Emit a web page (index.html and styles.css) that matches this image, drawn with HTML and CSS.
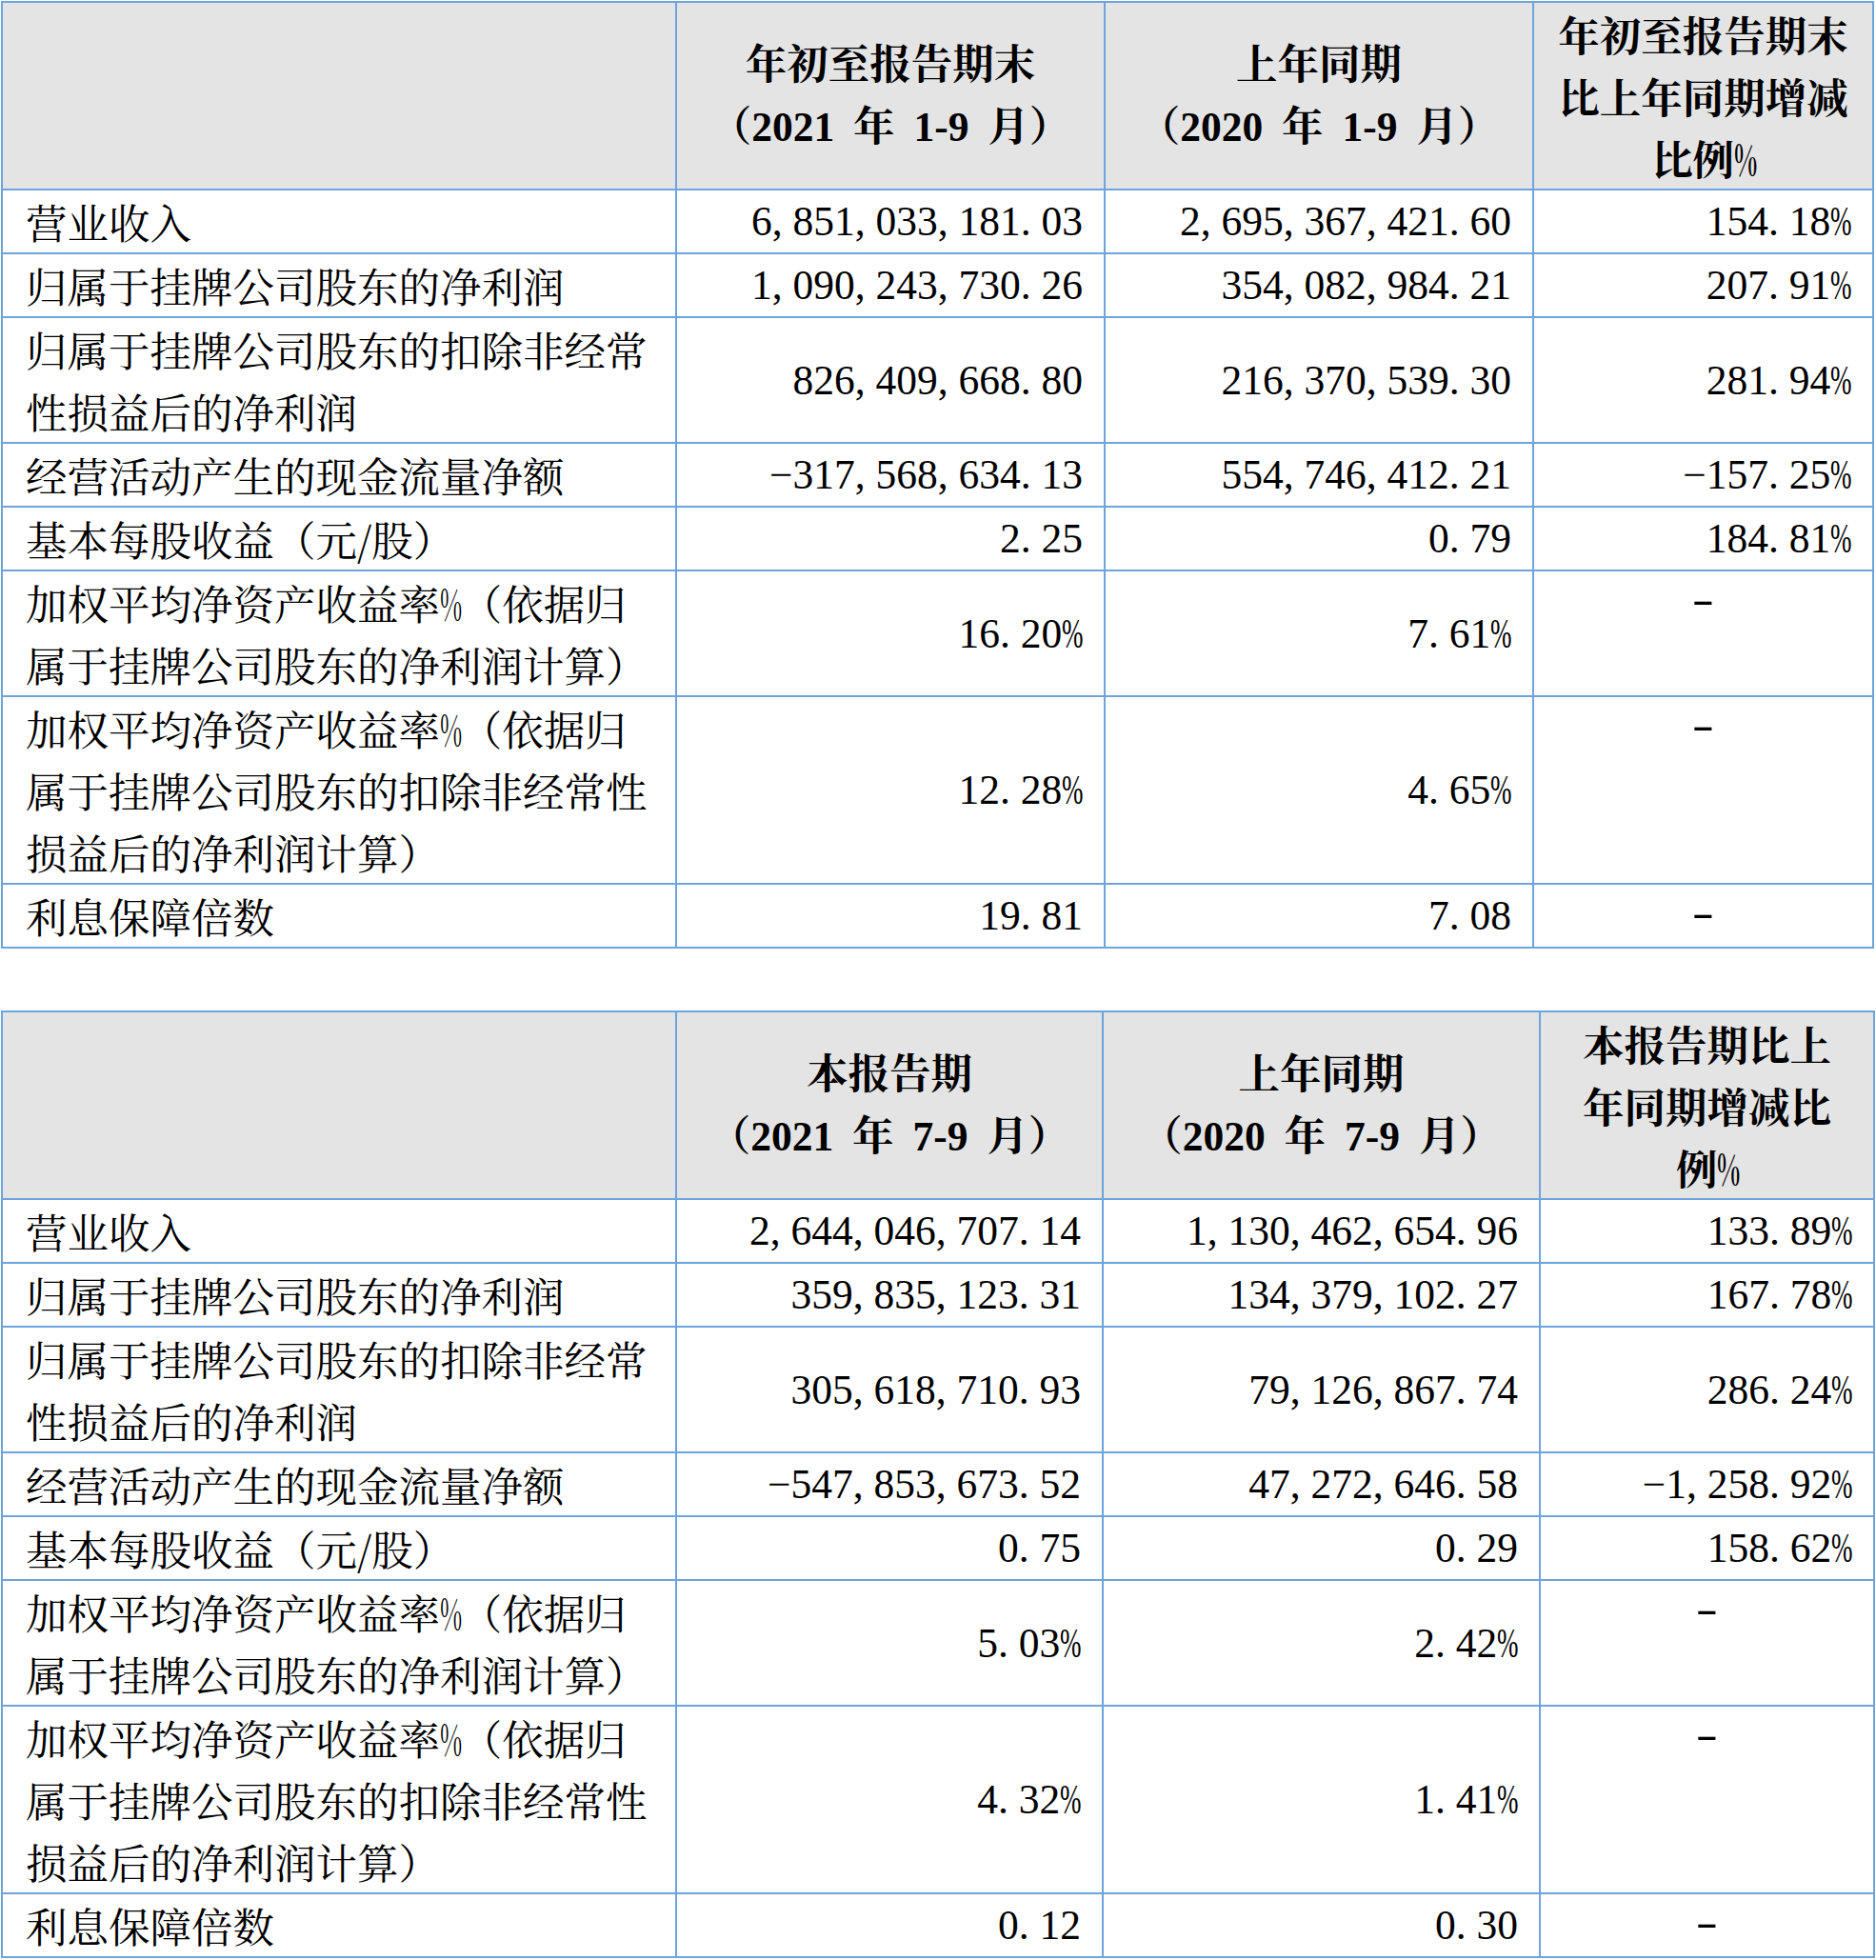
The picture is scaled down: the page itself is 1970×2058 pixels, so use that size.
FILE: index.html
```html
<!DOCTYPE html>
<html lang="zh-CN">
<head>
<meta charset="utf-8">
<title>主要财务数据</title>
<link rel="stylesheet" href="styles.css">
</head>
<body>
<table class="fin t1">
  <colgroup><col class="c1"><col class="c2"><col class="c3"><col class="c4"></colgroup>
  <tbody>
    <tr class="hd">
      <td></td>
      <td class="hmix">年初至报告期末<br>（2021 年 1-9 月）</td>
      <td class="hmix">上年同期<br>（2020 年 1-9 月）</td>
      <td class="hcjk">年初至报告期末<br>比上年同期增减<br>比例<span class="lp">%</span></td>
    </tr>
    <tr>
      <td class="lbl">营业收入</td>
      <td class="num">6<span class="p">,</span>851<span class="p">,</span>033<span class="p">,</span>181<span class="p">.</span>03</td>
      <td class="num">2<span class="p">,</span>695<span class="p">,</span>367<span class="p">,</span>421<span class="p">.</span>60</td>
      <td class="num">154<span class="p">.</span>18<span class="pc">%</span></td>
    </tr>
    <tr>
      <td class="lbl">归属于挂牌公司股东的净利润</td>
      <td class="num">1<span class="p">,</span>090<span class="p">,</span>243<span class="p">,</span>730<span class="p">.</span>26</td>
      <td class="num">354<span class="p">,</span>082<span class="p">,</span>984<span class="p">.</span>21</td>
      <td class="num">207<span class="p">.</span>91<span class="pc">%</span></td>
    </tr>
    <tr>
      <td class="lbl">归属于挂牌公司股东的扣除非经常<br>性损益后的净利润</td>
      <td class="num">826<span class="p">,</span>409<span class="p">,</span>668<span class="p">.</span>80</td>
      <td class="num">216<span class="p">,</span>370<span class="p">,</span>539<span class="p">.</span>30</td>
      <td class="num">281<span class="p">.</span>94<span class="pc">%</span></td>
    </tr>
    <tr>
      <td class="lbl">经营活动产生的现金流量净额</td>
      <td class="num">−317<span class="p">,</span>568<span class="p">,</span>634<span class="p">.</span>13</td>
      <td class="num">554<span class="p">,</span>746<span class="p">,</span>412<span class="p">.</span>21</td>
      <td class="num">−157<span class="p">.</span>25<span class="pc">%</span></td>
    </tr>
    <tr>
      <td class="lbl">基本每股收益（元/股）</td>
      <td class="num">2<span class="p">.</span>25</td>
      <td class="num">0<span class="p">.</span>79</td>
      <td class="num">184<span class="p">.</span>81<span class="pc">%</span></td>
    </tr>
    <tr>
      <td class="lbl">加权平均净资产收益率<span class="lp">%</span>（依据归<br>属于挂牌公司股东的净利润计算）</td>
      <td class="num">16<span class="p">.</span>20<span class="pc">%</span></td>
      <td class="num">7<span class="p">.</span>61<span class="pc">%</span></td>
      <td class="nil"><span class="dash">-</span></td>
    </tr>
    <tr>
      <td class="lbl">加权平均净资产收益率<span class="lp">%</span>（依据归<br>属于挂牌公司股东的扣除非经常性<br>损益后的净利润计算）</td>
      <td class="num">12<span class="p">.</span>28<span class="pc">%</span></td>
      <td class="num">4<span class="p">.</span>65<span class="pc">%</span></td>
      <td class="nil"><span class="dash">-</span></td>
    </tr>
    <tr>
      <td class="lbl">利息保障倍数</td>
      <td class="num">19<span class="p">.</span>81</td>
      <td class="num">7<span class="p">.</span>08</td>
      <td class="nil"><span class="dash">-</span></td>
    </tr>
  </tbody>
</table>

<table class="fin t2">
  <colgroup><col class="d1"><col class="d2"><col class="d3"><col class="d4"></colgroup>
  <tbody>
    <tr class="hd">
      <td></td>
      <td class="hmix">本报告期<br>（2021 年 7-9 月）</td>
      <td class="hmix">上年同期<br>（2020 年 7-9 月）</td>
      <td class="hcjk">本报告期比上<br>年同期增减比<br>例<span class="lp">%</span></td>
    </tr>
    <tr>
      <td class="lbl">营业收入</td>
      <td class="num">2<span class="p">,</span>644<span class="p">,</span>046<span class="p">,</span>707<span class="p">.</span>14</td>
      <td class="num">1<span class="p">,</span>130<span class="p">,</span>462<span class="p">,</span>654<span class="p">.</span>96</td>
      <td class="num">133<span class="p">.</span>89<span class="pc">%</span></td>
    </tr>
    <tr>
      <td class="lbl">归属于挂牌公司股东的净利润</td>
      <td class="num">359<span class="p">,</span>835<span class="p">,</span>123<span class="p">.</span>31</td>
      <td class="num">134<span class="p">,</span>379<span class="p">,</span>102<span class="p">.</span>27</td>
      <td class="num">167<span class="p">.</span>78<span class="pc">%</span></td>
    </tr>
    <tr>
      <td class="lbl">归属于挂牌公司股东的扣除非经常<br>性损益后的净利润</td>
      <td class="num">305<span class="p">,</span>618<span class="p">,</span>710<span class="p">.</span>93</td>
      <td class="num">79<span class="p">,</span>126<span class="p">,</span>867<span class="p">.</span>74</td>
      <td class="num">286<span class="p">.</span>24<span class="pc">%</span></td>
    </tr>
    <tr>
      <td class="lbl">经营活动产生的现金流量净额</td>
      <td class="num">−547<span class="p">,</span>853<span class="p">,</span>673<span class="p">.</span>52</td>
      <td class="num">47<span class="p">,</span>272<span class="p">,</span>646<span class="p">.</span>58</td>
      <td class="num">−1<span class="p">,</span>258<span class="p">.</span>92<span class="pc">%</span></td>
    </tr>
    <tr>
      <td class="lbl">基本每股收益（元/股）</td>
      <td class="num">0<span class="p">.</span>75</td>
      <td class="num">0<span class="p">.</span>29</td>
      <td class="num">158<span class="p">.</span>62<span class="pc">%</span></td>
    </tr>
    <tr>
      <td class="lbl">加权平均净资产收益率<span class="lp">%</span>（依据归<br>属于挂牌公司股东的净利润计算）</td>
      <td class="num">5<span class="p">.</span>03<span class="pc">%</span></td>
      <td class="num">2<span class="p">.</span>42<span class="pc">%</span></td>
      <td class="nil"><span class="dash">-</span></td>
    </tr>
    <tr>
      <td class="lbl">加权平均净资产收益率<span class="lp">%</span>（依据归<br>属于挂牌公司股东的扣除非经常性<br>损益后的净利润计算）</td>
      <td class="num">4<span class="p">.</span>32<span class="pc">%</span></td>
      <td class="num">1<span class="p">.</span>41<span class="pc">%</span></td>
      <td class="nil"><span class="dash">-</span></td>
    </tr>
    <tr>
      <td class="lbl">利息保障倍数</td>
      <td class="num">0<span class="p">.</span>12</td>
      <td class="num">0<span class="p">.</span>30</td>
      <td class="nil"><span class="dash">-</span></td>
    </tr>
  </tbody>
</table>
</body>
</html>
```

FILE: styles.css
```css
html, body {
  margin: 0;
  padding: 0;
  background: #ffffff;
}

body {
  padding: 1px 0 0 1px;
}

.fin {
  border-collapse: collapse;
  table-layout: fixed;
  color: #000000;
}

.fin td {
  border: 2px solid #6FA3DC;
  padding: 0;
  font-size: 43.5px;
  line-height: 65px;
  white-space: nowrap;
  overflow: visible;
}

.t1 { width: 1967px; }
.t2 { width: 1968px; margin-top: 65px; }

.c1 { width: 708px; }
.c2 { width: 450px; }
.c3 { width: 450px; }
.c4 { width: 357px; }

.d1 { width: 708px; }
.d2 { width: 448px; }
.d3 { width: 459px; }
.d4 { width: 351px; }

.hd td {
  background: #E4E4E4;
  text-align: center;
  vertical-align: middle;
  font-weight: 700;
  font-family: "Noto Serif CJK SC", "Noto Sans CJK SC", sans-serif;
}

.hd td.hmix {
  font-family: "Liberation Serif", "Noto Serif CJK SC", "Noto Sans CJK SC", serif;
  word-spacing: 9px;
}

.lbl {
  font-family: "Noto Serif CJK SC", "Noto Sans CJK SC", sans-serif;
  text-align: left;
  vertical-align: top;
  padding-left: 24px !important;
}

.num {
  font-family: "Liberation Serif", serif;
  text-align: right;
  vertical-align: middle;
  padding-right: 22px !important;
}

.nil {
  font-family: "Liberation Serif", serif;
  text-align: center;
  vertical-align: top;
}

.p {
  display: inline-block;
  width: 0.5em;
  text-align: left;
}

.pc {
  display: inline-block;
  width: 0.5em;
  text-align: left;
  transform: scaleX(0.62);
  transform-origin: left center;
}

.lp {
  display: inline-block;
  width: 0.5em;
  text-align: left;
  transform: scaleX(0.58);
  transform-origin: left center;
}

.dash {
  display: inline-block;
  transform: translateY(-3px) scaleX(1.6);
}
```
